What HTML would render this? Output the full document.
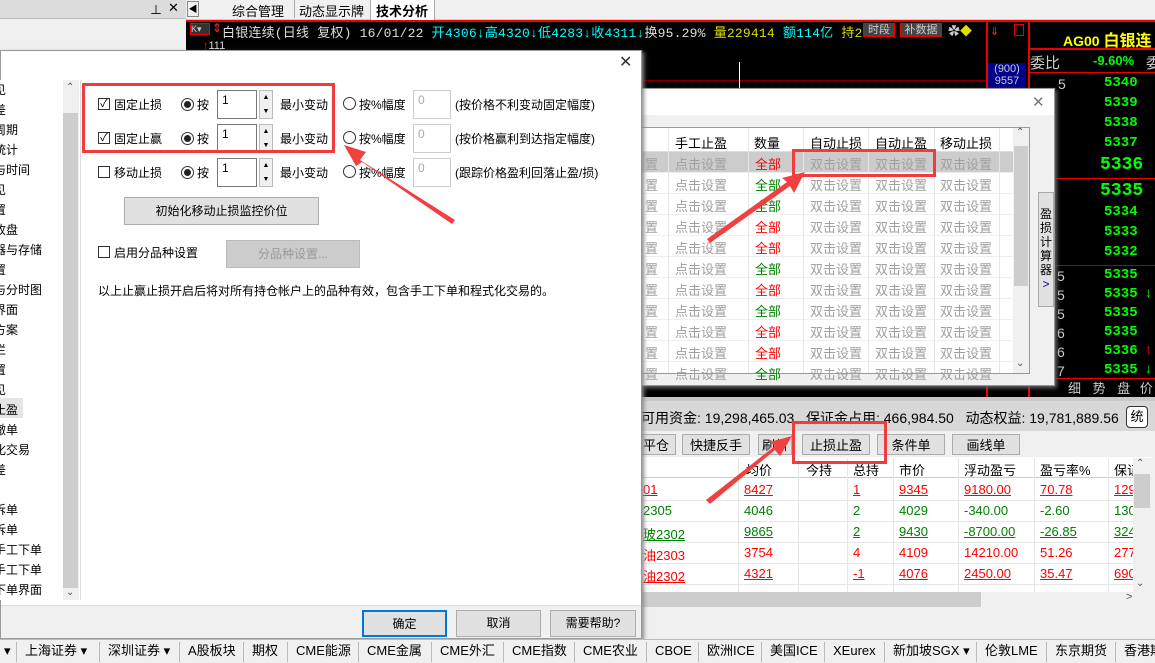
<!DOCTYPE html>
<html><head><meta charset="utf-8">
<style>
*{margin:0;padding:0;box-sizing:border-box}
body{width:1155px;height:663px;overflow:hidden;position:relative;background:#f0f0f0;font-family:"Liberation Sans","Noto Sans CJK SC",sans-serif;font-size:12px;color:#000}
.a{position:absolute;white-space:nowrap}
.btn{position:absolute;background:#e1e1e1;border:1px solid #adadad;text-align:center;font-size:12px}
.red{color:#ff0000}.grn{color:#008000}.g{color:#a0a0a0}
.q{position:absolute;color:#00ff00;font-weight:bold;font-family:"Liberation Mono",monospace;font-size:14px}
.rb{position:absolute;border:3px solid #f03c3c}
</style></head><body>
<div class="a" style="left:0;top:0;width:186px;height:19px;background:#dcdcdc;border-bottom:1px solid #bbb"></div>
<div class="a" style="left:150px;top:1px;font-size:12px">⊥</div>
<div class="a" style="left:168px;top:0;font-size:13px">✕</div>
<div class="a" style="left:186px;top:0;width:969px;height:20px;background:#f0f0f0;border-bottom:1px solid #ccc"></div>
<div class="a" style="left:187px;top:1px;width:12px;height:16px;border:1px solid #888;font-size:9px;text-align:center;line-height:14px">◀</div>
<div class="a" style="left:232px;top:1px;font-size:13px">综合管理</div>
<div class="a" style="left:294px;top:0;width:1px;height:18px;background:#aaa"></div>
<div class="a" style="left:299px;top:1px;font-size:13px">动态显示牌</div>
<div class="a" style="left:370px;top:0;width:65px;height:20px;background:#fff;border-left:1px solid #aaa;border-right:1px solid #aaa"></div>
<div class="a" style="left:376px;top:1px;font-size:13px;font-weight:bold">技术分析</div>
<div class="a" style="left:186px;top:20px;width:969px;height:378px;background:#000"></div>
<div class="a" style="left:186px;top:20px;width:969px;height:2px;background:#e00"></div>
<div class="a" style="left:190px;top:23px;width:20px;height:12px;border:1px solid #e00;background:#333;color:#ccc;font-size:9px;line-height:10px">K▾</div>
<div class="a" style="left:212px;top:21px;color:#f33;font-size:12px">⇕</div>
<div class="a" style="left:222px;top:22px;font-family:'Liberation Mono','Noto Sans CJK SC',monospace;font-size:13px;letter-spacing:0.2px;color:#ddd">白银连续(日线 复权) 16/01/22 <span style="color:#0ff">开4306↓高4320↓低4283↓收4311↓</span><span style="color:#ddd">换95.29%</span> <span style="color:#dd0">量229414</span> <span style="color:#0ff">额114亿</span> <span style="color:#dd0">持24076</span></div>
<div class="a" style="left:863px;top:23px;width:32px;height:14px;border:1px solid #e00;background:#444;color:#ccc;font-size:11px;line-height:12px;text-align:center">时段</div>
<div class="a" style="left:900px;top:23px;width:42px;height:14px;border:1px solid #e00;background:#444;color:#ccc;font-size:11px;line-height:12px;text-align:center">补数据</div>
<div class="a" style="left:948px;top:22px;color:#ccc;font-size:12px">✿<span style="color:#dd0">◆</span></div>
<div class="a" style="left:203px;top:40px;color:#ddd;font-size:11px"><span class="red">↑</span>111</div>
<div class="a" style="left:641px;top:80px;width:346px;border-top:1px dotted #900"></div>
<div class="a" style="left:739px;top:62px;width:1px;height:26px;background:#fff"></div>
<div class="a" style="left:986px;top:20px;width:2px;height:378px;background:#e00"></div>
<div class="a" style="left:1028px;top:20px;width:2px;height:378px;background:#e00"></div>
<div class="a" style="left:1014px;top:24px;width:10px;height:12px;border:1px solid #e00"></div>
<div class="a" style="left:990px;top:25px;color:#f33;font-size:11px">⇓</div>
<div class="a" style="left:988px;top:63px;width:38px;height:26px;background:#00008b;color:#ccc;font-size:11px;line-height:12px;text-align:center">(900)<br>9557</div>
<div class="a" style="left:1030px;top:48px;width:125px;height:2px;background:#e00"></div>
<div class="a" style="left:1030px;top:72px;width:125px;height:1px;background:#e00"></div>
<div class="a" style="left:1063px;top:27px;color:#ff0;font-weight:bold;font-size:14px">AG00 <span style="font-size:16px">白银连</span></div>
<div class="a" style="left:1030px;top:52px;color:#ccc;font-size:15px">委比</div>
<div class="a" style="left:1093px;top:53px;color:#0f0;font-weight:bold;font-size:13px">-9.60%</div>
<div class="a" style="left:1146px;top:52px;color:#ccc;font-size:15px">委</div>
<div class="a" style="left:1058px;top:76px;color:#ccc;font-size:14px">5</div>
<div class="q" style="left:1104px;top:75px">5340</div>
<div class="q" style="left:1104px;top:95px">5339</div>
<div class="q" style="left:1104px;top:115px">5338</div>
<div class="q" style="left:1104px;top:135px">5337</div>
<div class="q" style="left:1100px;top:155px;font-size:18px">5336</div>
<div class="a" style="left:1030px;top:178px;width:125px;height:1px;background:#e00"></div>
<div class="q" style="left:1100px;top:181px;font-size:18px">5335</div>
<div class="q" style="left:1104px;top:204px">5334</div>
<div class="q" style="left:1104px;top:224px">5333</div>
<div class="q" style="left:1104px;top:244px">5332</div>
<div class="a" style="left:1055px;top:265px;width:100px;height:1px;background:#a00"></div>
<div class="a" style="left:1057px;top:267px;color:#ccc;font-size:14px;line-height:19px">5<br>5<br>5<br>6<br>6<br>7</div>
<div class="q" style="left:1104px;top:266px;line-height:19px">5335<br>5335<br>5335<br>5335<br>5336<br>5335</div>
<div class="a" style="left:1145px;top:284px;color:#0f0;font-size:14px">↓</div>
<div class="a" style="left:1145px;top:341px;color:#f00;font-size:14px">↑</div>
<div class="a" style="left:1145px;top:360px;color:#0f0;font-size:14px">↓</div>
<div class="a" style="left:1055px;top:378px;width:100px;height:18px;border-top:1px solid #e00"></div>
<div class="a" style="left:1068px;top:378px;color:#ccc;font-size:13px">细 <span style="margin-left:8px">势</span> <span style="margin-left:8px">盘</span> <span style="margin-left:6px">价</span></div>
<div class="a" style="left:641px;top:397px;width:514px;height:4px;background:#c8c8c8"></div>
<div class="a" style="left:641px;top:88px;width:414px;height:298px;background:#f0f0f0;border:1px solid #999;box-shadow:2px 2px 4px #666"></div>
<div class="a" style="left:641px;top:89px;width:413px;height:26px;background:#fff"></div>
<div class="a" style="left:1032px;top:93px;font-size:15px;color:#777">✕</div>
<div class="a" style="left:641px;top:127px;width:389px;height:247px;background:#fff;border:1px solid #999"></div>
<div class="a" style="left:641px;top:128px;width:372px;height:24px;background:#fff;border-bottom:1px solid #ddd"></div>
<div class="a" style="left:675px;top:133px;font-size:13px">手工止盈</div>
<div class="a" style="left:754px;top:133px;font-size:13px">数量</div>
<div class="a" style="left:810px;top:133px;font-size:13px">自动止损</div>
<div class="a" style="left:875px;top:133px;font-size:13px">自动止盈</div>
<div class="a" style="left:940px;top:133px;font-size:13px">移动止损</div>
<div class="a" style="left:641px;top:152px;width:372px;height:20px;background:#ccc"></div>
<div id="rows"></div>
<div class="a" style="left:668px;top:128px;width:1px;height:245px;background:#e6e6e6"></div>
<div class="a" style="left:748px;top:128px;width:1px;height:245px;background:#e6e6e6"></div>
<div class="a" style="left:803px;top:128px;width:1px;height:245px;background:#e6e6e6"></div>
<div class="a" style="left:868px;top:128px;width:1px;height:245px;background:#e6e6e6"></div>
<div class="a" style="left:934px;top:128px;width:1px;height:245px;background:#e6e6e6"></div>
<div class="a" style="left:999px;top:128px;width:1px;height:245px;background:#e6e6e6"></div>
<div class="a" style="left:1013px;top:128px;width:16px;height:245px;background:#f0f0f0"></div>
<div class="a" style="left:1014px;top:146px;width:14px;height:140px;background:#cdcdcd"></div>
<div class="a" style="left:1016px;top:127px;font-size:10px;color:#555">⌃</div>
<div class="a" style="left:1016px;top:358px;font-size:10px;color:#555">⌄</div>
<div class="a" style="left:1038px;top:192px;width:16px;height:115px;background:#e1e1e1;border:1px solid #aaa;font-size:12px;line-height:14px;text-align:center;white-space:normal;padding-top:14px">盈损计算器<br><span style="color:#00a">&gt;</span></div>
<div class="a" style="left:641px;top:401px;width:514px;height:30px;background:#d8d8d8"></div>
<div class="a" style="left:641px;top:408px;font-size:14px">可用资金: 19,298,465.03 &nbsp;&nbsp;保证金占用: 466,984.50 &nbsp;&nbsp;动态权益: 19,781,889.56</div>
<div class="a" style="left:1126px;top:406px;width:22px;height:22px;border:1px solid #333;border-radius:4px;background:#fff;text-align:center;line-height:20px;font-size:13px">统</div>
<div class="a" style="left:641px;top:431px;width:514px;height:26px;background:#f0f0f0"></div>
<div class="btn" style="left:636px;top:434px;width:40px;height:21px;font-size:13px">平仓</div>
<div class="btn" style="left:682px;top:434px;width:68px;height:21px;font-size:13px">快捷反手</div>
<div class="btn" style="left:758px;top:434px;width:34px;height:21px;font-size:13px">刷新</div>
<div class="btn" style="left:802px;top:434px;width:68px;height:21px;font-size:13px">止损止盈</div>
<div class="btn" style="left:877px;top:434px;width:68px;height:21px;font-size:13px">条件单</div>
<div class="btn" style="left:952px;top:434px;width:68px;height:21px;font-size:13px">画线单</div>
<div class="a" style="left:641px;top:457px;width:510px;height:150px;background:#fff;border-bottom:1px solid #ccc"></div>
<div class="a" style="left:641px;top:477px;width:492px;height:1px;background:#ccc"></div>
<div class="a" style="left:746px;top:460px;font-size:13px">均价</div>
<div class="a" style="left:806px;top:460px;font-size:13px">今持</div>
<div class="a" style="left:853px;top:460px;font-size:13px">总持</div>
<div class="a" style="left:899px;top:460px;font-size:13px">市价</div>
<div class="a" style="left:964px;top:460px;font-size:13px">浮动盈亏</div>
<div class="a" style="left:1040px;top:460px;font-size:13px">盈亏率%</div>
<div class="a" style="left:1114px;top:460px;font-size:13px">保证</div>
<div id="rows2"></div>
<div class="a" style="left:738px;top:458px;width:1px;height:148px;background:#e6e6e6"></div>
<div class="a" style="left:798px;top:458px;width:1px;height:148px;background:#e6e6e6"></div>
<div class="a" style="left:847px;top:458px;width:1px;height:148px;background:#e6e6e6"></div>
<div class="a" style="left:893px;top:458px;width:1px;height:148px;background:#e6e6e6"></div>
<div class="a" style="left:958px;top:458px;width:1px;height:148px;background:#e6e6e6"></div>
<div class="a" style="left:1034px;top:458px;width:1px;height:148px;background:#e6e6e6"></div>
<div class="a" style="left:1108px;top:458px;width:1px;height:148px;background:#e6e6e6"></div>
<div class="a" style="left:1133px;top:458px;width:18px;height:134px;background:#f0f0f0"></div>
<div class="a" style="left:1134px;top:474px;width:16px;height:34px;background:#cdcdcd"></div>
<div class="a" style="left:1136px;top:458px;font-size:10px;color:#555">⌃</div>
<div class="a" style="left:1136px;top:578px;font-size:10px;color:#555">⌄</div>
<div class="a" style="left:641px;top:592px;width:510px;height:15px;background:#f0f0f0"></div>
<div class="a" style="left:641px;top:592px;width:340px;height:15px;background:#cdcdcd"></div>
<div class="a" style="left:1126px;top:591px;font-size:11px;color:#555">&gt;</div>
<div class="a" style="left:0;top:50px;width:642px;height:589px;background:#fff;border:1px solid #999;box-shadow:2px 2px 4px #888"></div>
<div class="a" style="left:619px;top:52px;font-size:16px;color:#333">✕</div>
<div class="a" style="left:0;top:80px;width:79px;height:520px;background:#fff;border-right:1px solid #ddd"></div>
<div class="a" style="left:63px;top:80px;width:16px;height:520px;background:#f0f0f0"></div>
<div class="a" style="left:63px;top:113px;width:15px;height:475px;background:#cdcdcd"></div>
<div class="a" style="left:66px;top:82px;font-size:10px;color:#555">⌃</div>
<div class="a" style="left:66px;top:587px;font-size:10px;color:#555">⌄</div>
<div class="a" style="left:0;top:398px;width:23px;height:20px;background:#e5e5e5"></div>
<div class="a" style="left:-6px;top:80px;font-size:12px;line-height:20px;white-space:pre">见
差
周期
统计
与时间
见
置
收盘
器与存储
置
与分时图
界面
方案
栏
置
见
止盈
撤单
化交易
差
-
拆单
拆单
手工下单
手工下单
下单界面</div>
<div class="a" style="left:80px;top:80px;width:1px;height:520px;background:#ddd"></div>
<div id="opts"></div>
<div class="btn" style="left:124px;top:197px;width:195px;height:28px;line-height:26px">初始化移动止损监控价位</div>
<div class="a" style="left:98px;top:246px;width:12px;height:12px;border:1px solid #333"></div>
<div class="a" style="left:114px;top:244px">启用分品种设置</div>
<div class="btn" style="left:226px;top:240px;width:134px;height:28px;line-height:26px;color:#999;background:#ccc;border-color:#bbb">分品种设置...</div>
<div class="a" style="left:98px;top:282px">以上止赢止损开启后将对所有持仓帐户上的品种有效，包含手工下单和程式化交易的。</div>
<div class="a" style="left:1px;top:605px;width:640px;height:33px;background:#f0f0f0;border-top:1px solid #ddd"></div>
<div class="btn" style="left:362px;top:610px;width:85px;height:27px;line-height:25px;border:2px solid #0078d7">确定</div>
<div class="btn" style="left:456px;top:610px;width:85px;height:27px;line-height:25px">取消</div>
<div class="btn" style="left:550px;top:610px;width:86px;height:27px;line-height:25px">需要帮助?</div>
<div class="a" style="left:0;top:639px;width:1155px;height:24px;background:#f0f0f0;border-top:1px solid #bbb;font-size:13px;line-height:22px" id="tb"></div>
<div class="rb" style="left:82px;top:83px;width:253px;height:70px"></div>
<div class="rb" style="left:792px;top:149px;width:144px;height:28px"></div>
<div class="rb" style="left:792px;top:421px;width:95px;height:43px"></div>
<svg class="a" style="left:0;top:0" width="1155" height="663">
<g fill="#f04040">
<polygon points="455,220 360,160 366,152 344,145 356,166 362,162 452,224"/>
<polygon points="710,243 790,186 794,193 805,172 782,178 787,182 707,239"/>
<polygon points="710,504 775,450 780,456 792,436 770,442 775,446 706,500"/>
</g></svg>
<script>
var o='';
var top0=[152,173,194,215,236,257,278,299,320,341,362];
var cols=['red','grn','grn','red','red','grn','red','grn','red','red','grn'];
top0.forEach(function(t,i){
o+='<div class="a" style="left:641px;top:'+(t+20)+'px;width:372px;height:1px;background:#eee"></div>';
o+='<div class="a g" style="left:645px;top:'+(t+2)+'px;font-size:13px">置</div>';
o+='<div class="a g" style="left:675px;top:'+(t+2)+'px;font-size:13px">点击设置</div>';
o+='<div class="a '+cols[i]+'" style="left:755px;top:'+(t+2)+'px;font-size:13px">全部</div>';
o+='<div class="a g" style="left:810px;top:'+(t+2)+'px;font-size:13px">双击设置</div>';
o+='<div class="a g" style="left:875px;top:'+(t+2)+'px;font-size:13px">双击设置</div>';
o+='<div class="a g" style="left:940px;top:'+(t+2)+'px;font-size:13px">双击设置</div>';
});
document.getElementById('rows').innerHTML=o;
var r=[['01','8427','1','9345','9180.00','70.78','129','red',1],['2305','4046','2','4029','-340.00','-2.60','130','grn',0],['玻2302','9865','2','9430','-8700.00','-26.85','324','grn',1],['油2303','3754','4','4109','14210.00','51.26','277','red',0],['油2302','4321','-1','4076','2450.00','35.47','690','red',1]];
o='';
r.forEach(function(x,i){var t=480+i*21;var u=x[8]?'text-decoration:underline;':'';var c=x[7];
o+='<div class="a" style="left:641px;top:'+(t+20)+'px;width:492px;height:1px;background:#e6e6e6"></div>';
[[643,x[0]],[744,x[1]],[853,x[2]],[899,x[3]],[964,x[4]],[1040,x[5]],[1114,x[6]]].forEach(function(p){
o+='<div class="a '+c+'" style="left:'+p[0]+'px;top:'+(t+2)+'px;font-size:13px;'+u+'">'+p[1]+'</div>';});
});
document.getElementById('rows2').innerHTML=o;
o='';
[[84,'固定止损',1],[118,'固定止赢',1],[152,'移动止损',0]].forEach(function(x){var t=x[0];
o+='<div class="a" style="left:98px;top:'+(t+14)+'px;width:12px;height:12px;border:1px solid #333;font-size:11px;line-height:10px;text-align:center">'+(x[2]?'✓':'')+'</div>';
o+='<div class="a" style="left:114px;top:'+(t+12)+'px">'+x[1]+'</div>';
o+='<div class="a" style="left:181px;top:'+(t+14)+'px;width:13px;height:13px;border:1px solid #333;border-radius:50%"><div style="margin:2px;width:7px;height:7px;border-radius:50%;background:#222"></div></div>';
o+='<div class="a" style="left:197px;top:'+(t+12)+'px">按</div>';
o+='<div class="a" style="left:217px;top:'+(t+6)+'px;width:40px;height:29px;border:1px solid #777;padding:2px 4px">1</div>';
o+='<div class="a" style="left:259px;top:'+(t+6)+'px;width:14px;height:29px;border:1px solid #bbb;background:#f0f0f0;font-size:7px;line-height:14px;text-align:center">▲<br>▼</div>';
o+='<div class="a" style="left:280px;top:'+(t+12)+'px">最小变动</div>';
o+='<div class="a" style="left:343px;top:'+(t+13)+'px;width:13px;height:13px;border:1px solid #333;border-radius:50%"></div>';
o+='<div class="a" style="left:359px;top:'+(t+12)+'px">按%幅度</div>';
o+='<div class="a" style="left:413px;top:'+(t+6)+'px;width:38px;height:29px;border:1px solid #ccc;padding:2px 4px;color:#aaa">0</div>';
});
o+='<div class="a" style="left:455px;top:96px">(按价格不利变动固定幅度)</div>';
o+='<div class="a" style="left:455px;top:130px">(按价格赢利到达指定幅度)</div>';
o+='<div class="a" style="left:455px;top:164px">(跟踪价格盈利回落止盈/损)</div>';
document.getElementById('opts').innerHTML=o;
var tabs=[[4,'▾'],[25,'上海证券 ▾'],[90,'深圳证券 ▾'],[153,'A股板块'],[206,'期权'],[241,'CME能源'],[300,'CME金属'],[359,'CME外汇'],[418,'CME指数'],[477,'CME农业'],[648,'CBOE'],[707,'欧洲ICE'],[770,'美国ICE'],[833,'XEurex'],[893,'新加坡SGX ▾'],[985,'伦敦LME'],[1055,'东京期货'],[1124,'香港期']];
var pos={'上海证券 ▾':25,'深圳证券 ▾':89,'A股板块':153,'期权':206,'CME能源':241,'CME金属':300,'CME外汇':359,'CME指数':418,'CME农业':477};
var sp={'上海证券 ▾':[25,16],'深圳证券 ▾':[89,81],'A股板块':[153,148],'期权':[206,199],'CME能源':[241,234],'CME金属':[300,293],'CME外汇':[359,352],'CME指数':[418,411],'CME农业':[477,470]};
tabs=[[4,'▾'],[25,'上海证券 ▾'],[108,'深圳证券 ▾'],[188,'A股板块'],[252,'期权'],[296,'CME能源'],[367,'CME金属'],[440,'CME外汇'],[512,'CME指数'],[583,'CME农业'],[655,'CBOE'],[707,'欧洲ICE'],[770,'美国ICE'],[833,'XEurex'],[893,'新加坡SGX ▾'],[985,'伦敦LME'],[1055,'东京期货'],[1124,'香港期']];
o='';
tabs.forEach(function(t,i){o+='<span style="position:absolute;left:'+t[0]+'px;top:0">'+t[1]+'</span>';if(i>0)o+='<span style="position:absolute;left:'+(t[0]-9)+'px;top:2px;width:1px;height:20px;background:#bbb"></span>';});
document.getElementById('tb').innerHTML=o;
</script>
</body></html>
